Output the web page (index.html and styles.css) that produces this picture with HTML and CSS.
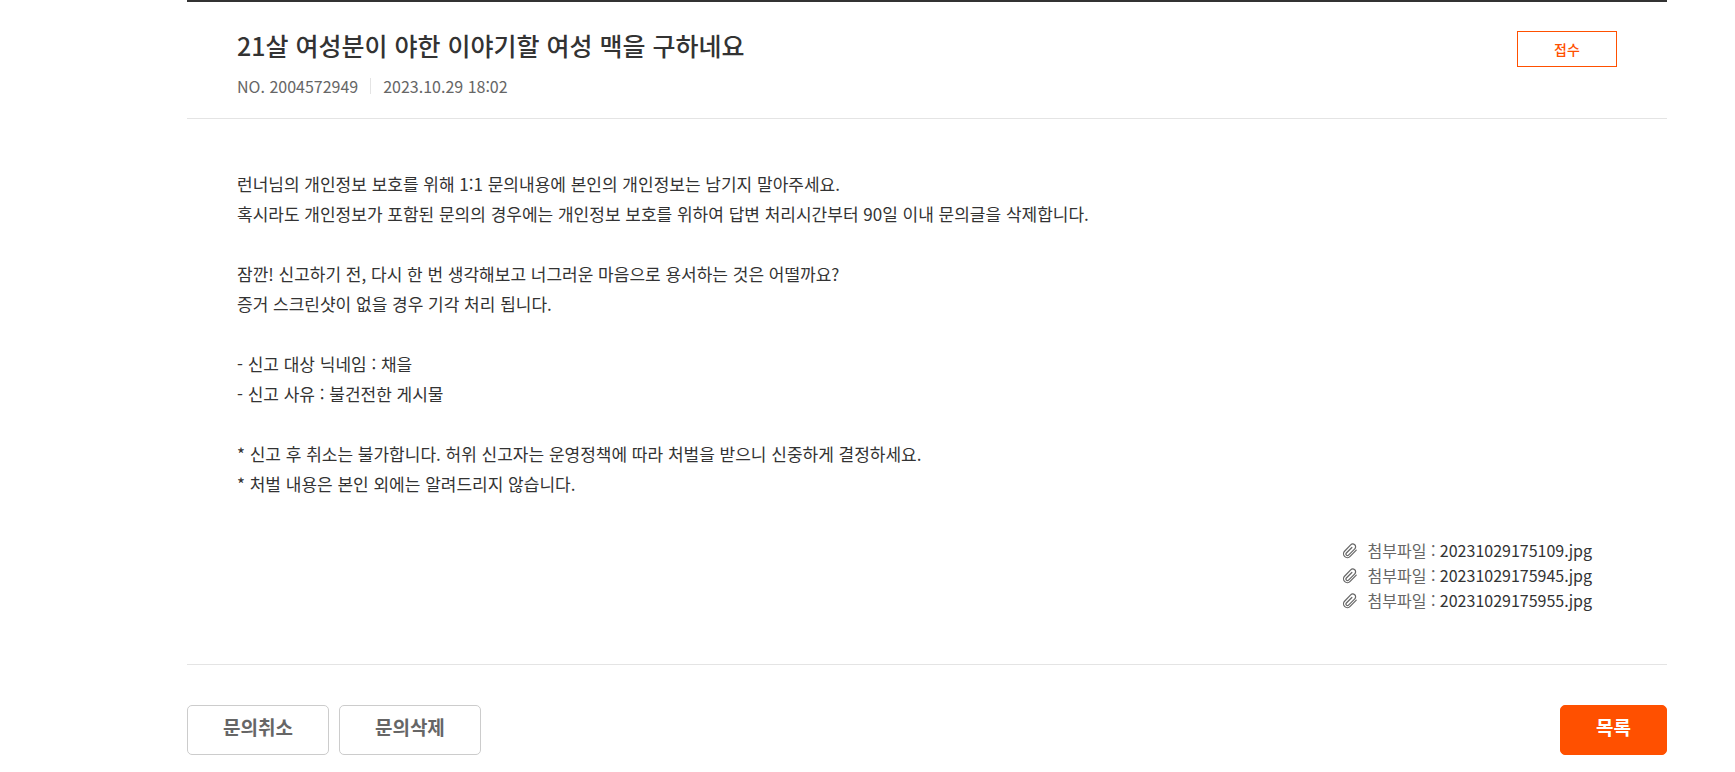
FILE: index.html
```
<!doctype html>
<html lang="ko">
<head>
    <meta charset="UTF-8">
    <title>1:1 문의</title>
    <link rel="stylesheet" href="styles.css">
</head>
<body>
<!-- 첨부파일 클립 아이콘 -->
<svg class="defs" aria-hidden="true">
    <symbol id="clip" viewBox="0 0 24 24">
        <path d="M21.4 10.6l-9.2 9.4a5.4 5.4 0 0 1-8.4-7.6l9.2-9.6a4.3 4.3 0 0 1 6.2 6l-9.4 9.4a2.2 2.2 0 0 1-3.2-3.2l8.2-8.3" fill="none" stroke="currentColor" stroke-width="1.8" stroke-linecap="round"/>
    </symbol>
</svg>
<main class="view">
    <header class="view-head">
        <div class="view-title">
            <h1>21살 여성분이 야한 이야기할 여성 맥을 구하네요</h1>
            <ul class="meta">
                <li>NO. 2004572949</li>
                <li>2023.10.29 18:02</li>
            </ul>
        </div>
        <span class="state">접수</span>
    </header>
    <div class="view-body">
        <p>런너님의 개인정보 보호를 위해 1:1 문의내용에 본인의 개인정보는 남기지 말아주세요.<br>
        혹시라도 개인정보가 포함된 문의의 경우에는 개인정보 보호를 위하여 답변 처리시간부터 90일 이내 문의글을 삭제합니다.</p>
        <p>잠깐! 신고하기 전, 다시 한 번 생각해보고 너그러운 마음으로 용서하는 것은 어떨까요?<br>
        증거 스크린샷이 없을 경우 기각 처리 됩니다.</p>
        <p>- 신고 대상 닉네임 : 채을<br>
        - 신고 사유 : 불건전한 게시물</p>
        <p>* 신고 후 취소는 불가합니다. 허위 신고자는 운영정책에 따라 처벌을 받으니 신중하게 결정하세요.<br>
        * 처벌 내용은 본인 외에는 알려드리지 않습니다.</p>
    </div>
    <ul class="files">
        <li><svg class="clip"><use href="#clip"/></svg><span>첨부파일 : <a href="#">20231029175109.jpg</a></span></li>
        <li><svg class="clip"><use href="#clip"/></svg><span>첨부파일 : <a href="#">20231029175945.jpg</a></span></li>
        <li><svg class="clip"><use href="#clip"/></svg><span>첨부파일 : <a href="#">20231029175955.jpg</a></span></li>
    </ul>
    <div class="btns">
        <button type="button" class="btn">문의취소</button>
        <button type="button" class="btn">문의삭제</button>
        <button type="button" class="btn btn-list">목록</button>
    </div>
</main>
</body>
</html>
```
FILE: styles.css
```
body{
    margin: 0;
    background: #fff;
    color: #333;
    font-family: "Noto Sans CJK KR", sans-serif;
    font-size: 17px;
    line-height: 30px;
}
h1, p, ul{
    margin: 0;
    padding: 0;
}
ul{
    list-style: none;
}
a{
    color: #333;
    text-decoration: none;
}
.defs{
    display: none;
}
.view{
    margin: 0 68px 0 187px;
    border-top: 2px solid #333;
}
.view-head{
    display: flex;
    justify-content: space-between;
    align-items: flex-start;
    padding: 29px 50px 20px;
    border-bottom: 1px solid #e4e4e4;
}
.view-title h1{
    font-size: 25px;
    font-weight: 500;
    line-height: 28px;
}
.meta{
    display: flex;
    align-items: center;
    margin-top: 15px;
    color: #666;
    font-size: 16px;
    line-height: 24px;
}
.meta li + li{
    display: flex;
    align-items: center;
}
.meta li + li::before{
    content: "";
    height: 16px;
    margin: 0 12px;
    border-left: 1px solid #e4e4e4;
}
.state{
    box-sizing: border-box;
    width: 100px;
    height: 36px;
    border: 1px solid #ff5000;
    color: #ff5000;
    font-size: 14px;
    font-weight: 500;
    line-height: 34px;
    text-align: center;
}
.view-body{
    padding: 50px 50px 0;
}
.view-body p{
    margin-bottom: 30px;
}
.files{
    display: flex;
    flex-direction: column;
    align-items: flex-end;
    padding: 9px 75px 51px 50px;
    border-bottom: 1px solid #e4e4e4;
    color: #666;
    font-size: 16px;
    line-height: 25px;
}
.files li{
    display: flex;
    align-items: center;
    gap: 10px;
}
.clip{
    width: 16px;
    height: 16px;
}
.btns{
    display: flex;
    gap: 10px;
    padding: 40px 0 17px;
}
.btn{
    height: 50px;
    padding: 0 35px 8px;
    border: 1px solid #ccc;
    border-radius: 5px;
    background: #fff;
    color: #666;
    font-family: inherit;
    font-size: 19px;
    font-weight: 700;
    cursor: pointer;
}
.btn-list{
    margin-left: auto;
    border-color: #ff5000;
    background: #ff5000;
    color: #fff;
}
```
